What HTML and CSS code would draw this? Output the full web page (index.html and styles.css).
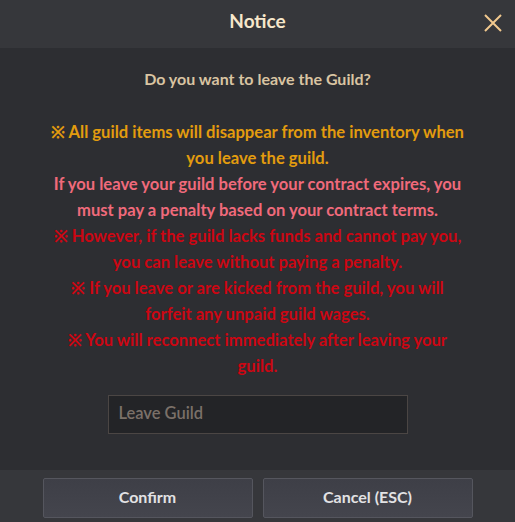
FILE: index.html
```html
<!DOCTYPE html>
<html lang="en">
<head>
    <meta charset="UTF-8">
    <meta name="viewport" content="width=device-width, initial-scale=1.0">
    <title>Notice</title>
    <link rel="stylesheet" href="styles.css">
</head>
<body>
    <div class="dialog">
        <!-- Cabecera -->
        <div class="dialog-header">
            <h3 class="dialog-title">Notice</h3>
            <button class="dialog-close" aria-label="Close">
                <svg width="20" height="20" viewBox="0 0 20 20">
                    <path d="M2 2 L18 18 M18 2 L2 18" stroke="#f2c98e" stroke-width="2" fill="none"/>
                </svg>
            </button>
        </div>

        <!-- Cuerpo -->
        <div class="dialog-body">
            <p class="question">Do you want to leave the Guild?</p>
            <div class="notes">
                <p class="note note-orange">※ All guild items will disappear from the inventory when<br>you leave the guild.</p>
                <p class="note note-pink">If you leave your guild before your contract expires, you<br>must pay a penalty based on your contract terms.</p>
                <p class="note note-red">※ However, if the guild lacks funds and cannot pay you,<br>you can leave without paying a penalty.</p>
                <p class="note note-red">※ If you leave or are kicked from the guild, you will<br>forfeit any unpaid guild wages.</p>
                <p class="note note-red">※ You will reconnect immediately after leaving your<br>guild.</p>
            </div>
            <input class="confirm-input" type="text" placeholder="Leave Guild">
        </div>

        <!-- Pie -->
        <div class="dialog-footer">
            <button class="dialog-btn">Confirm</button>
            <button class="dialog-btn">Cancel (ESC)</button>
        </div>
    </div>
</body>
</html>
```

FILE: styles.css
```css
/* Estilos base */
body {
    margin: 0;
    font-family: 'Lato', 'Open Sans', sans-serif;
    background-color: #2d2e32;
}

.dialog {
    width: 515px;
    height: 522px;
    display: flex;
    flex-direction: column;
    background-color: #2d2e32;
}

/* Cabecera */
.dialog-header {
    position: relative;
    height: 48px;
    display: flex;
    justify-content: center;
    padding-top: 9px;
    box-sizing: border-box;
    background-color: #36373b;
}

.dialog-title {
    margin: 0;
    font-size: 19px;
    font-weight: 700;
    line-height: 24px;
    color: #f7e7cb;
}

.dialog-close {
    position: absolute;
    right: 12px;
    top: 13px;
    width: 20px;
    height: 20px;
    padding: 0;
    border: none;
    background: none;
    cursor: pointer;
}

/* Cuerpo */
.dialog-body {
    flex: 1;
    display: flex;
    flex-direction: column;
    align-items: center;
    padding-top: 18px;
}

.question {
    margin: 0;
    font-size: 16px;
    font-weight: 700;
    line-height: 26px;
    color: #d9c4a2;
}

.notes {
    margin-top: 27px;
    text-align: center;
}

.note {
    margin: 0;
    font-size: 16.6px;
    font-weight: 700;
    line-height: 26px;
    white-space: nowrap;
}

.note-orange {
    color: #e39c0e;
}

.note-pink {
    color: #f06a7b;
}

.note-red {
    color: #cc0612;
}

.confirm-input {
    margin-top: 16px;
    width: 300px;
    height: 39px;
    box-sizing: border-box;
    padding: 0 10px 3px;
    border: 1px solid #4b4644;
    background-color: #232427;
    font-family: inherit;
    font-size: 16.5px;
    font-weight: 600;
    color: #d0c4b4;
    outline: none;
}

.confirm-input::placeholder {
    color: #7b7169;
}

/* Pie */
.dialog-footer {
    height: 52px;
    display: flex;
    justify-content: center;
    gap: 10px;
    padding-top: 8px;
    box-sizing: border-box;
    background-color: #36373b;
}

.dialog-btn {
    width: 210px;
    height: 40px;
    padding: 0 0 4px;
    border: 1px solid #55565e;
    border-radius: 2px;
    background: linear-gradient(#3e3f47, #44454d);
    font-family: inherit;
    font-size: 16px;
    font-weight: 700;
    color: #e2e2e4;
    cursor: pointer;
}
```
